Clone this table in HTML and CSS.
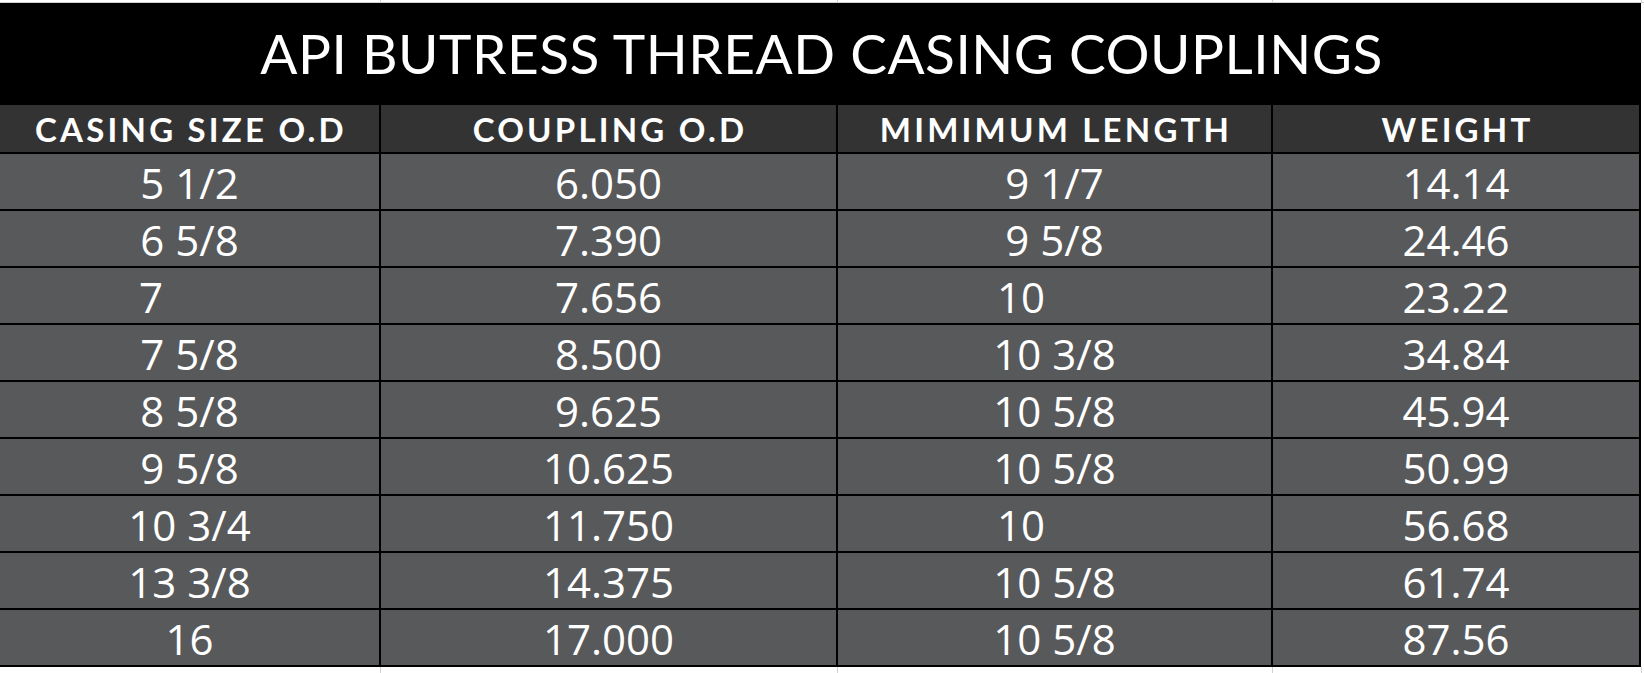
FILE: index.html
```html
<!DOCTYPE html>
<html lang="en">
<head>
<meta charset="utf-8">
<title>API Butress Thread Casing Couplings</title>
<link rel="stylesheet" href="styles.css">
</head>
<body>
<div class="page">
  <div class="gridstrip">
    <span class="gs-cell gs-c1"></span><span class="gs-cell gs-c2"></span><span class="gs-cell gs-c3"></span><span class="gs-cell gs-c4"></span>
  </div>
  <div class="sheet">
    <div class="title">API BUTRESS THREAD CASING COUPLINGS</div>
    <div class="th">CASING SIZE O.D</div>
    <div class="th">COUPLING O.D</div>
    <div class="th">MIMIMUM LENGTH</div>
    <div class="th">WEIGHT</div>

    <div class="td">5 1/2</div><div class="td">6.050</div><div class="td">9 1/7</div><div class="td">14.14</div>
    <div class="td">6 5/8</div><div class="td">7.390</div><div class="td">9 5/8</div><div class="td">24.46</div>
    <div class="td td--c1-left">7</div><div class="td">7.656</div><div class="td td--c3-left">10</div><div class="td">23.22</div>
    <div class="td">7 5/8</div><div class="td">8.500</div><div class="td">10 3/8</div><div class="td">34.84</div>
    <div class="td">8 5/8</div><div class="td">9.625</div><div class="td">10 5/8</div><div class="td">45.94</div>
    <div class="td">9 5/8</div><div class="td">10.625</div><div class="td">10 5/8</div><div class="td">50.99</div>
    <div class="td">10 3/4</div><div class="td">11.750</div><div class="td td--c3-left">10</div><div class="td">56.68</div>
    <div class="td">13 3/8</div><div class="td">14.375</div><div class="td">10 5/8</div><div class="td">61.74</div>
    <div class="td">16</div><div class="td">17.000</div><div class="td">10 5/8</div><div class="td">87.56</div>
  </div>
  <div class="gridstrip gridstrip--bottom">
    <span class="gs-cell gs-c1"></span><span class="gs-cell gs-c2"></span><span class="gs-cell gs-c3"></span><span class="gs-cell gs-c4"></span>
  </div>
</div>
</body>
</html>
```

FILE: styles.css
```css
* {
  box-sizing: border-box;
}

html, body {
  margin: 0;
  padding: 0;
  background: #ffffff;
}

body {
  font-family: "Lato", "Open Sans", sans-serif;
  color: #ffffff;
  overflow: hidden;
}

.page {
  width: 1644px;
  height: 673px;
  display: flex;
  flex-direction: column;
}

.gridstrip {
  display: flex;
  height: 3px;
  border-bottom: 1px solid #d2d2d2;
}

.gridstrip--bottom {
  border-bottom: none;
  flex: 1;
}

.gs-cell {
  border-right: 1px solid #d2d2d2;
}

.gs-c1 { width: 381px; }
.gs-c2 { width: 457px; }
.gs-c3 { width: 435px; }
.gs-c4 { width: 369px; }

.sheet {
  display: grid;
  width: 1641px;
  grid-template-columns: 379px 455px 433px 366px;
  grid-template-rows: 100px 47px repeat(9, 55px);
  gap: 2px;
  padding: 0 2px 2px 0;
  background: #000000;
}

.title {
  grid-column: 1 / -1;
  background: #000000;
  display: flex;
  align-items: center;
  justify-content: center;
  font-size: 55px;
  font-weight: 400;
  letter-spacing: 0.5px;
  padding-left: 4px;
}

.th {
  background: #333333;
  display: flex;
  align-items: center;
  justify-content: center;
  font-size: 33px;
  font-weight: 700;
  letter-spacing: 3.2px;
  padding-left: 3px;
}

.td {
  background: #58595b;
  display: flex;
  align-items: center;
  justify-content: center;
  font-family: "Open Sans", "Lato", sans-serif;
  font-size: 42px;
  font-weight: 400;
  padding-top: 1px;
}

.td--c1-left {
  justify-content: flex-start;
  padding-left: 139px;
}

.td--c3-left {
  justify-content: flex-start;
  padding-left: 159px;
}
```
